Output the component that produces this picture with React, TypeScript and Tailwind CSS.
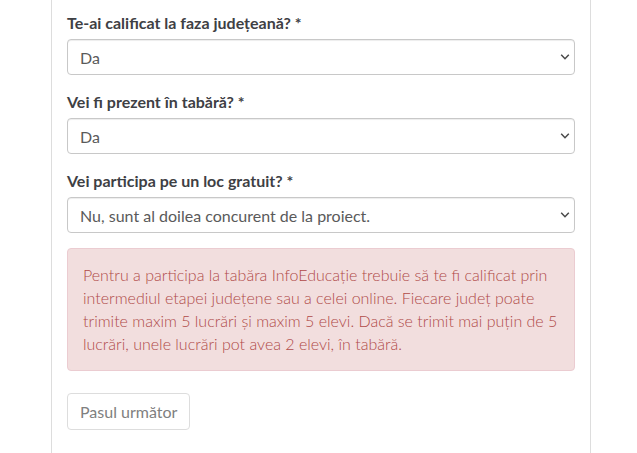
import React, { useState } from "react";

type FieldProps = { id: string; label: string; options: string[] };

function SelectField({ id, label, options }: FieldProps) {
  const [value, setValue] = useState(options[0]);
  return (
    <div className="mb-[15px]">
      <label htmlFor={id} className="mb-1 block font-bold leading-6 text-[#3e4044]">
        {label}
      </label>
      <div className="relative">
        <select
          id={id}
          value={value}
          onChange={(e) => setValue(e.target.value)}
          className="block h-9 w-full appearance-none rounded border border-[#c8c8c8] bg-white px-3 text-[#5a5a5a] shadow-[inset_0_1px_1px_rgba(0,0,0,0.075)]"
        >
          {options.map((o) => (
            <option key={o}>{o}</option>
          ))}
        </select>
        <svg
          viewBox="0 0 10 6"
          className="pointer-events-none absolute top-[15px] right-[5px] h-[6px] w-[10px]"
          fill="none"
          stroke="#484848"
          strokeWidth="1.5"
        >
          <path d="M1.2 0.8 5 4.7 8.8 0.8" />
        </svg>
      </div>
    </div>
  );
}

export default function App() {
  return (
    <main className="min-h-screen bg-white pr-[46px] pl-[51px] font-['Lato',sans-serif] text-[16px] leading-[23px]">
      <form
        className="min-h-screen border-x border-[#ddd] px-[15px] pt-[11px]"
        onSubmit={(e) => e.preventDefault()}
      >
        <SelectField id="qualified" label="Te-ai calificat la faza județeană? *" options={["Da", "Nu"]} />
        <SelectField id="present" label="Vei fi prezent în tabără? *" options={["Da", "Nu"]} />
        <SelectField
          id="free"
          label="Vei participa pe un loc gratuit? *"
          options={["Nu, sunt al doilea concurent de la proiect.", "Da"]}
        />
        <div className="mb-[22px] rounded border border-[#ebccd1] bg-[#f2dede] px-[15px] pt-[14px] pb-[15px] font-light text-[#b04a48]">
          Pentru a participa la tabăra InfoEducație trebuie să te fi calificat prin intermediul etapei județene sau a
          celei online. Fiecare județ poate trimite maxim 5 lucrări și maxim 5 elevi. Dacă se trimit mai puțin de 5
          lucrări, unele lucrări pot avea 2 elevi, în tabără.
        </div>
        <button
          type="submit"
          className="rounded border border-[#ddd] bg-white px-3 py-[6px] text-[#808080]"
        >
          Pasul următor
        </button>
      </form>
    </main>
  );
}
